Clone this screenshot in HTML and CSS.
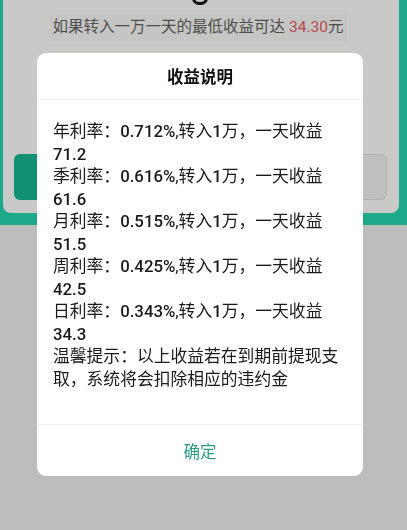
FILE: index.html
```html
<!DOCTYPE html>
<html lang="zh">
<head>
<meta charset="utf-8">
<title>收益说明</title>
<link rel="stylesheet" href="styles.css">
</head>
<body>
<div class="page">
  <div class="hero">
    <div class="card">
      <div class="big-digit"></div>
      <div class="subtitle">如果转入一万一天的最低收益可达 <span class="red">34.30</span>元</div>
      <div class="actions">
        <div class="btn btn-primary"></div>
        <div class="btn btn-ghost"></div>
      </div>
    </div>
  </div>
</div>
<div class="overlay">
  <div class="dialog">
    <div class="dialog-title">收益说明</div>
    <div class="dialog-body">
      <p>年利率：<span class="num">0.712%</span>,转入<span class="num">1</span>万，一天收益<span class="num">71.2</span></p>
      <p>季利率：<span class="num">0.616%</span>,转入<span class="num">1</span>万，一天收益<span class="num">61.6</span></p>
      <p>月利率：<span class="num">0.515%</span>,转入<span class="num">1</span>万，一天收益<span class="num">51.5</span></p>
      <p>周利率：<span class="num">0.425%</span>,转入<span class="num">1</span>万，一天收益<span class="num">42.5</span></p>
      <p>日利率：<span class="num">0.343%</span>,转入<span class="num">1</span>万，一天收益<span class="num">34.3</span></p>
      <p>温馨提示：以上收益若在到期前提现支取，系统将会扣除相应的违约金</p>
    </div>
    <div class="dialog-footer">确定</div>
  </div>
</div>
</body>
</html>
```
FILE: styles.css
```css
html, body {
  margin: 0;
  padding: 0;
}
body {
  background: #bdbdbd;
  font-family: Roboto, "Noto Sans CJK SC", sans-serif;
  width: 407px;
  height: 530px;
  overflow: hidden;
}
.page {
  display: flex;
  flex-direction: column;
}
.hero {
  background: #1ca98a;
  padding: 0 8px 12px 3px;
}
.card {
  background: #c9c9c7;
  height: 213px;
  border-radius: 0 0 8px 8px;
  display: flex;
  flex-direction: column;
  align-items: center;
  box-sizing: border-box;
}
.big-digit {
  width: 10px;
  height: 4px;
  border: 3px solid #111;
  border-top: none;
  border-radius: 0 0 8px 8px;
  margin-left: -2px;
  margin-top: -2px;
}
.subtitle {
  margin-top: 9px;
  margin-left: -6px;
  background: #c5c5c3;
  padding: 5px 4px;
  font-size: 15.5px;
  line-height: 17px;
  color: #4d4d4d;
}
.red {
  color: #b44a50;
}
.actions {
  margin-top: 113px;
  align-self: stretch;
  display: flex;
  gap: 12px;
  padding: 0 12px 0 11px;
}
.btn {
  flex: 1;
  height: 46px;
  border-radius: 6px;
  box-sizing: border-box;
}
.btn-primary {
  background: #138f73;
}
.btn-ghost {
  background: #bfbfbf;
  border: 1px solid #b0b0b0;
}
.overlay {
  position: fixed;
  inset: 0;
  padding: 53px 0 0 37px;
}
.dialog {
  width: 326px;
  background: #fff;
  border-radius: 9px;
  display: flex;
  flex-direction: column;
  overflow: hidden;
}
.dialog-title {
  height: 46px;
  display: flex;
  align-items: center;
  justify-content: center;
  font-size: 16.5px;
  font-weight: 700;
  color: #111;
  border-bottom: 1px solid #f0f0f0;
}
.dialog-body {
  padding: 20px 16px 34px 16px;
  border-bottom: 1px solid #ededed;
}
.dialog-body p {
  margin: 0;
  font-size: 16.8px;
  line-height: 22.5px;
  color: #1a1a1a;
}
.num {
  font-weight: 500;
}
.dialog-footer {
  height: 51px;
  display: flex;
  align-items: center;
  justify-content: center;
  font-size: 16.5px;
  color: #2a9d85;
}
```
